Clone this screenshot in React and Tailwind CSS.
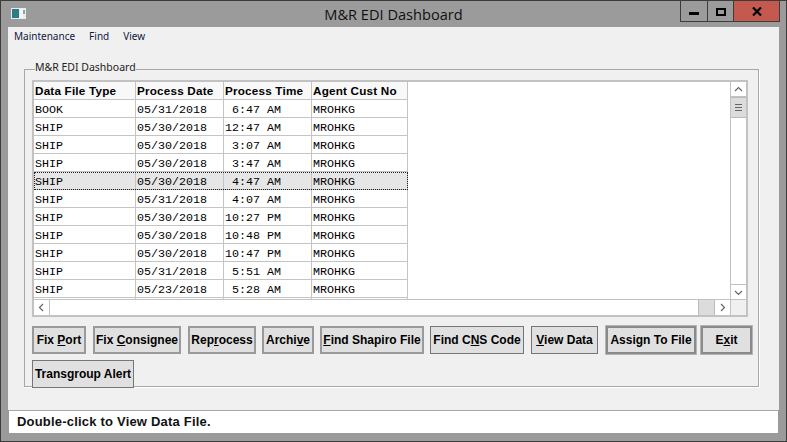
import React from 'react';

const rows = [
  ['BOOK', '05/31/2018', ' 6:47 AM'],
  ['SHIP', '05/30/2018', '12:47 AM'],
  ['SHIP', '05/30/2018', ' 3:07 AM'],
  ['SHIP', '05/30/2018', ' 3:47 AM'],
  ['SHIP', '05/30/2018', ' 4:47 AM'],
  ['SHIP', '05/31/2018', ' 4:07 AM'],
  ['SHIP', '05/30/2018', '10:27 PM'],
  ['SHIP', '05/30/2018', '10:48 PM'],
  ['SHIP', '05/30/2018', '10:47 PM'],
  ['SHIP', '05/31/2018', ' 5:51 AM'],
  ['SHIP', '05/23/2018', ' 5:28 AM'],
  ['', '', ''],
];

const cols = ['w-[102px]', 'w-[88px]', 'w-[88px]', 'w-[96px]'];

const HeaderCell = ({ children, width }) => (
  <div className={`${width} h-[18px] shrink-0 border-r border-b border-[#c4c4c4] bg-[#f8f8f8] pl-[1px] text-[11.7px] leading-[18px] font-bold tracking-[0.2px] text-black`}>
    {children}
  </div>
);

const Row = ({ row, selected }) => (
  <div className={`flex h-[18px] w-[374px] shrink-0 font-['Liberation_Mono',monospace] text-[11.67px] leading-[16px] text-black ${selected ? 'bg-[#e6e6e6] outline-1 -outline-offset-1 outline-dotted outline-[#222]' : ''}`}>
    {[...row, row[0] ? 'MROHKG' : ''].map((cell, i) => (
      <div key={i} className={`${cols[i]} shrink-0 whitespace-pre border-r border-b border-[#c4c4c4] pl-[1px] pt-[2px]`}>
        {cell}
      </div>
    ))}
  </div>
);

const Btn = ({ width, strong, thin, mr, children }) => (
  <button
    className={`${width} ${mr} h-[28px] shrink-0 bg-[#e0e0e0] text-[12px] font-bold text-black whitespace-nowrap ${
      thin ? 'border border-[#767676]' : strong ? 'border-2 border-[#8a8a8a] outline-1 outline-[#b5b5b5]' : 'border-2 border-[#9a9a9a]'
    }`}
  >
    {children}
  </button>
);

const ScrollArrow = ({ d, className }) => (
  <div className={`flex items-center justify-center bg-white ${className}`}>
    <svg width="9" height="9" viewBox="0 0 9 9" fill="none" stroke="#666" strokeWidth="1.2">
      <path d={d} />
    </svg>
  </div>
);

export default function App() {
  return (
    <div className="flex h-[442px] w-[787px] flex-col overflow-hidden border border-[#3c3c3c] bg-[#9b9b9b] font-['Liberation_Sans',Arial,sans-serif]">
      {/* title bar */}
      <div className="grid h-[26px] shrink-0 grid-cols-[1fr_auto_1fr]">
        <div className="pl-[10px] pt-[7px]">
          <svg width="15" height="11" viewBox="0 0 15 11">
            <rect width="15" height="11" fill="#e6ece8" />
            <rect x="1" y="1" width="7" height="9" fill="#2f7a88" />
            <rect x="9" y="1" width="3" height="9" fill="#f4f4f4" />
            <rect x="12" y="2" width="2" height="4" fill="#7fa9b0" />
          </svg>
        </div>
        <div className="pt-[3px] font-['Open_Sans',sans-serif] text-[14.6px] leading-[20px] text-[#111]">M&amp;R EDI Dashboard</div>
        <div className="flex justify-end pr-[6px]">
          <div className="flex h-[21px] border-x border-b border-[#3c3c3c]">
            <div className="flex w-[27px] items-end justify-center border-r border-[#3c3c3c] pb-[6px]">
              <div className="h-[3px] w-[10px] bg-black" />
            </div>
            <div className="flex w-[26px] items-start justify-center border-r border-[#3c3c3c] pt-[7px]">
              <div className="h-[8px] w-[10px] border-2 border-black" />
            </div>
            <div className="flex w-[45px] items-center justify-center bg-[#c3594f]">
              <svg width="10" height="9" viewBox="0 0 10 9" stroke="#000" strokeWidth="2.2">
                <path d="M1 0.5 9 8.5M9 0.5 1 8.5" />
              </svg>
            </div>
          </div>
        </div>
      </div>

      {/* client area */}
      <div className="ml-[7px] mr-[7px] flex h-[383px] shrink-0 flex-col bg-[#f0f0f0]">
        <div className="flex h-[16px] items-end gap-[14px] pl-[6px] font-['Noto_Sans',sans-serif] text-[10px] leading-[14px] text-[#101840]">
          <span>Maintenance</span>
          <span>Find</span>
          <span>View</span>
        </div>

        <fieldset className="ml-[16px] mt-[18px] h-[326px] w-[735px] border border-[#a8a8a8] pl-[7px] [box-shadow:1px_1px_0_#fff]">
          <legend className="ml-[3px] pb-[4px] font-['Noto_Sans',sans-serif] text-[10.5px] leading-[13px] text-[#222]">M&amp;R EDI Dashboard</legend>

          {/* grid */}
          <div className="mt-[2px] flex h-[237px] w-[716px] border-2 border-[#c2c2c2] border-l-[#c2c2c2]">
            <div className="flex w-[698px] flex-col bg-white">
              <div className="h-[219px] overflow-hidden">
                <div className="flex">
                  {['Data File Type', 'Process Date', 'Process Time', 'Agent Cust No'].map((h, i) => (
                    <HeaderCell key={h} width={cols[i]}>{h}</HeaderCell>
                  ))}
                </div>
                {rows.map((row, i) => (
                  <Row key={i} row={row} selected={i === 4} />
                ))}
              </div>
              {/* horizontal scrollbar */}
              <div className="flex h-[16px] border-t border-[#c2c2c2]">
                <ScrollArrow d="M6 1 2.5 4.5 6 8" className="w-[16px] border-r border-[#c2c2c2]" />
                <div className="flex-1" />
                <div className="w-[17px] border-x border-[#bbb] bg-[#dcdcdc]" />
                <ScrollArrow d="M3 1 6.5 4.5 3 8" className="w-[15px]" />
              </div>
            </div>
            {/* vertical scrollbar */}
            <div className="flex w-[16px] flex-col">
              <div className="flex h-[219px] flex-col border-l border-[#c2c2c2] bg-white">
                <ScrollArrow d="M1 6 4.5 2.5 8 6" className="h-[15px] border-b border-[#c2c2c2]" />
                <div className="flex h-[21px] flex-col items-center justify-center gap-[2px] border-y border-[#bbb] bg-[#dcdcdc]">
                  <div className="h-[1px] w-[7px] bg-[#666]" />
                  <div className="h-[1px] w-[7px] bg-[#666]" />
                  <div className="h-[1px] w-[7px] bg-[#666]" />
                </div>
                <div className="flex-1" />
                <ScrollArrow d="M1 3 4.5 6.5 8 3" className="h-[15px] border-t border-[#c2c2c2]" />
              </div>
              <div className="h-[16px] border-t border-l border-[#c2c2c2] bg-[#f0f0f0]" />
            </div>
          </div>

          {/* buttons */}
          <div className="mt-[9px] flex">
            <Btn width="w-[54px]" mr="mr-[7px]">Fix <u>P</u>ort</Btn>
            <Btn width="w-[88px]" mr="mr-[7px]">Fix <u>C</u>onsignee</Btn>
            <Btn width="w-[68px]" mr="mr-[6px]">Rep<u>r</u>ocess</Btn>
            <Btn width="w-[52px]" mr="mr-[6px]">Archi<u>v</u>e</Btn>
            <Btn width="w-[104px]" mr="mr-[6px]"><u>F</u>ind Shapiro File</Btn>
            <Btn width="w-[94px]" mr="mr-[7px]" thin>Find C<u>N</u>S Code</Btn>
            <Btn width="w-[67px]" mr="mr-[8px]" thin><u>V</u>iew Data</Btn>
            <Btn width="w-[90px]" mr="mr-[5px]" strong>Assign To File</Btn>
            <Btn width="w-[51px]" mr="mr-0" strong>E<u>x</u>it</Btn>
          </div>
          <div className="mt-[6px]">
            <Btn width="w-[102px]" mr="mr-0" thin>Transgroup Alert</Btn>
          </div>
        </fieldset>
      </div>

      {/* status bar */}
      <div className="mx-[8px] h-[23px] shrink-0 border-t border-[#a8a8a8] bg-white pl-[8px] text-[13px] leading-[22px] font-bold tracking-[0.2px] text-[#111]">
        Double-click to View Data File.
      </div>
    </div>
  );
}
